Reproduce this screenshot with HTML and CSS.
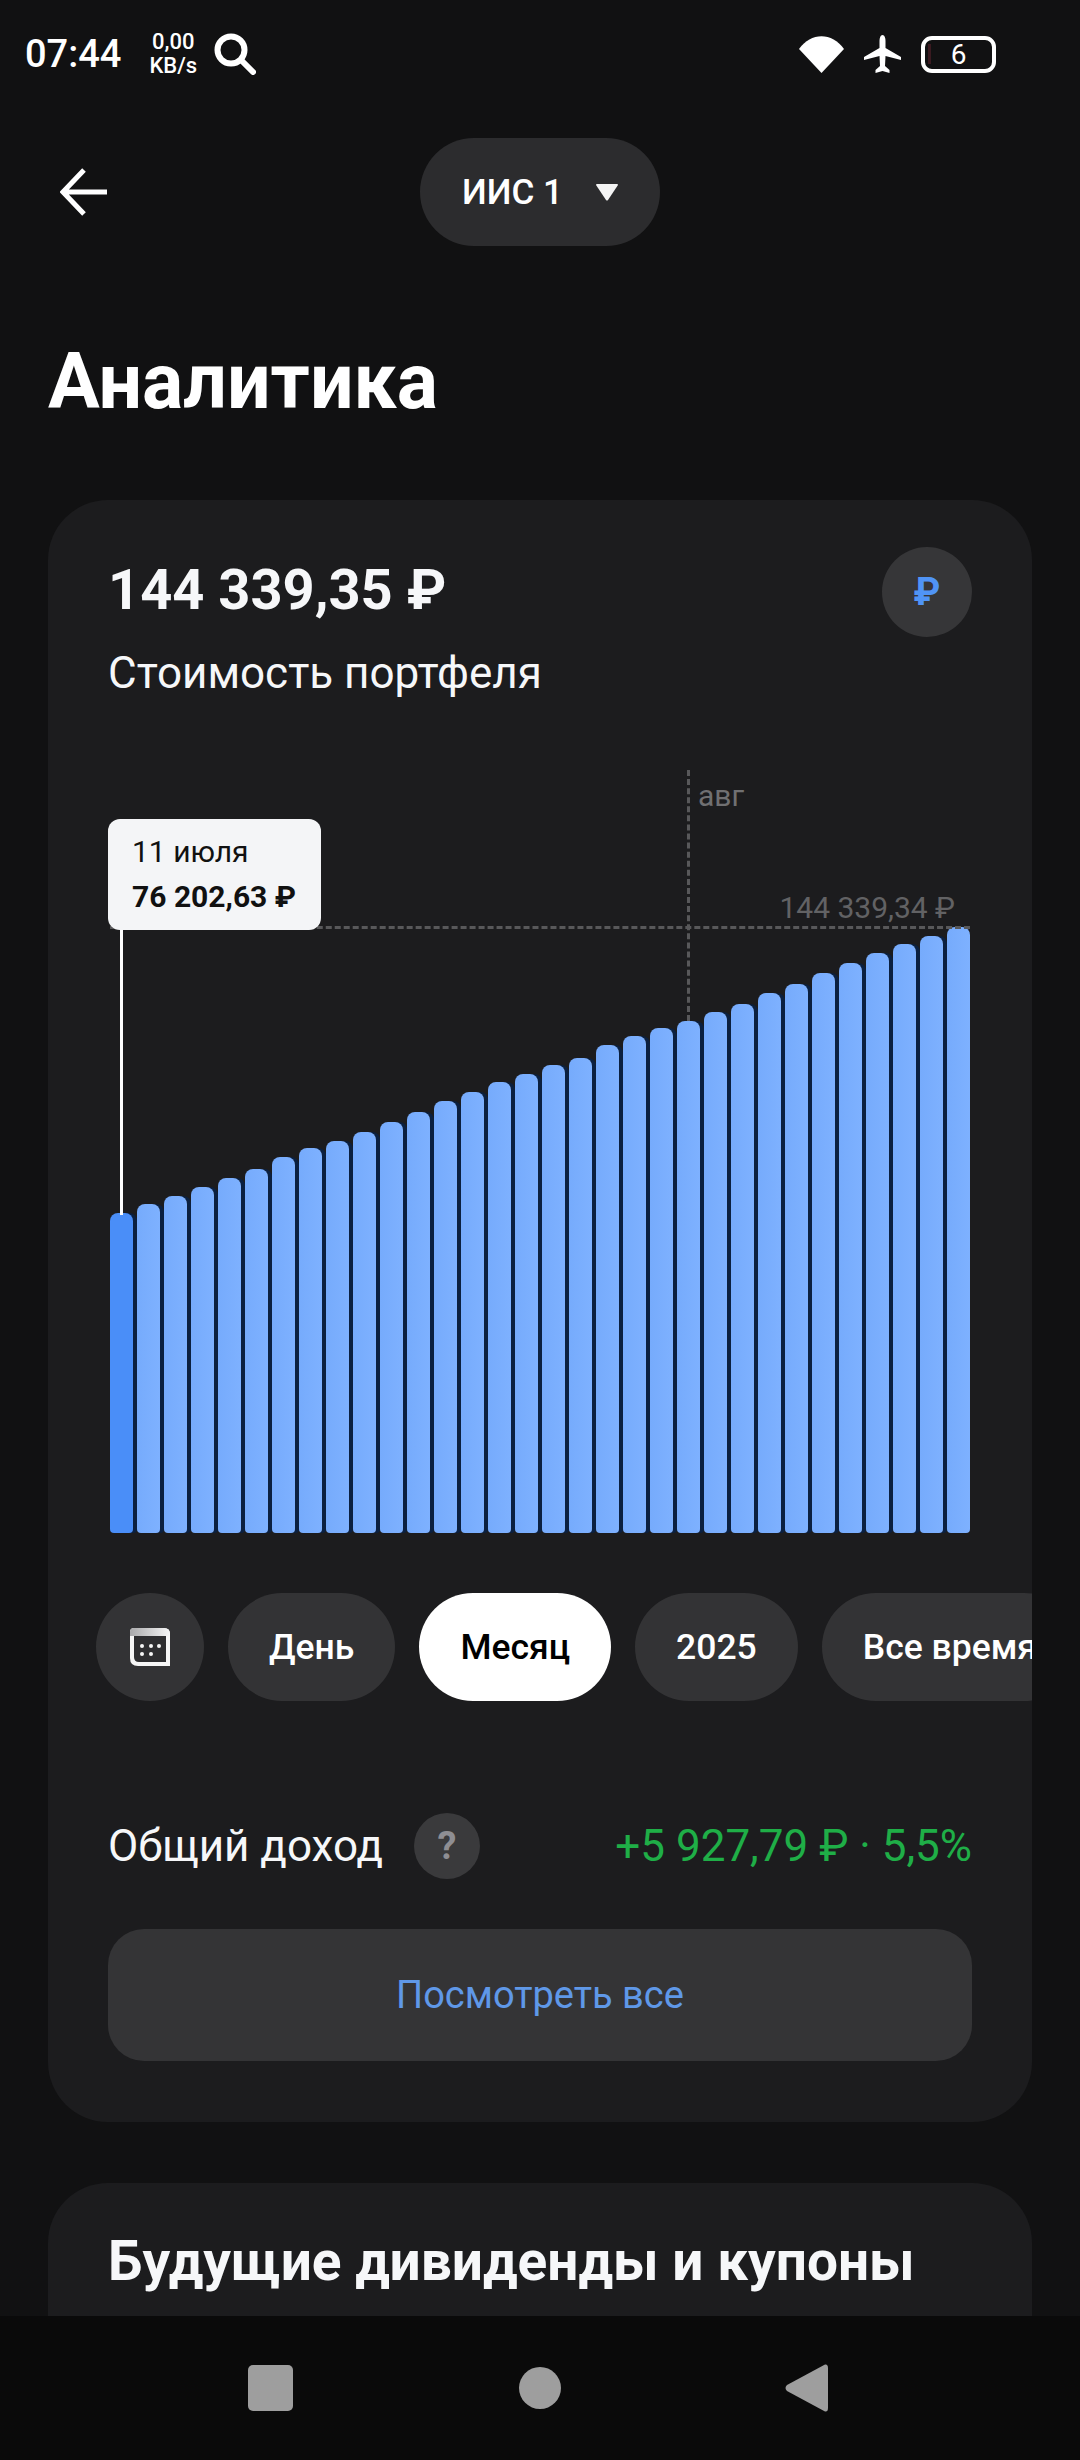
FILE: index.html
```html
<!DOCTYPE html>
<html lang="ru">
<head>
    <meta charset="UTF-8">
    <meta name="viewport" content="width=device-width, initial-scale=1.0">
    <title>Аналитика</title>
    <link rel="stylesheet" href="styles.css">
</head>
<body>
<div class="phone">

    <div class="screen">
        <div class="statusBar">
            <div class="statusLeft">
                <span class="clock">07:44</span>
                <span class="netSpeed">0,00<br>KB/s</span>
                <svg class="searchIcon" viewBox="0 0 42 42" width="42" height="42">
                    <circle cx="17" cy="17" r="13.5" fill="none" stroke="#fff" stroke-width="6"/>
                    <path d="M27 27 L39 39" stroke="#fff" stroke-width="6" stroke-linecap="round"/>
                </svg>
            </div>
            <div class="statusRight">
                <svg viewBox="0 0 45 37" width="45" height="37">
                    <path d="M0 13 C12 -4 33 -4 45 13 L22.5 37 Z" fill="#fff"/>
                </svg>
                <svg viewBox="0 0 37 38" width="37" height="38">
                    <path d="M18.5 0 C20.5 0 21.5 3 21.5 6 L21.5 13 L37 22 L37 25 L21.5 21 L21 31 L25.500 35 L25.500 38 L18.500 36 L11.500 38 L11.500 35 L16 31 L15.500 21 L0 25 L0 22 L15.500 13 L15.500 6 C15.500 3 16.500 0 18.500 0 Z" fill="#fff"/>
                </svg>
                <div class="battery"><span class="batteryTint"></span>6</div>
            </div>
        </div>

        <div class="topBar">
            <svg class="backIcon" viewBox="0 0 48 48" width="48" height="48">
                <path d="M47 24 L4 24 M24 2 L3 24 L24 46" fill="none" stroke="#fff" stroke-width="5"/>
            </svg>
            <div class="accountPill">
                <span>ИИС 1</span>
                <svg viewBox="0 0 22 17" width="22" height="17"><path d="M0 1 Q0 0 1 0 L21 0 Q22 0 22 1 L12 16 Q11 17 10 16 Z" fill="#f4f4f4"/></svg>
            </div>
        </div>

        <h1 class="pageTitle">Аналитика</h1>

        <section class="card">
            <div class="cardHead">
                <div>
                    <div class="totalValue">144 339,35 ₽</div>
                    <div class="totalLabel">Стоимость портфеля</div>
                </div>
                <div class="currencyBtn">₽</div>
            </div>

            <div class="chart">
                <div class="bars">
                    <div class="bar barActive" style="height:320px"></div>
                    <div class="bar" style="height:329px"></div>
                    <div class="bar" style="height:337px"></div>
                    <div class="bar" style="height:346px"></div>
                    <div class="bar" style="height:355px"></div>
                    <div class="bar" style="height:364px"></div>
                    <div class="bar" style="height:376px"></div>
                    <div class="bar" style="height:385px"></div>
                    <div class="bar" style="height:392px"></div>
                    <div class="bar" style="height:401px"></div>
                    <div class="bar" style="height:411px"></div>
                    <div class="bar" style="height:421px"></div>
                    <div class="bar" style="height:432px"></div>
                    <div class="bar" style="height:441px"></div>
                    <div class="bar" style="height:451px"></div>
                    <div class="bar" style="height:459px"></div>
                    <div class="bar" style="height:468px"></div>
                    <div class="bar" style="height:475px"></div>
                    <div class="bar" style="height:488px"></div>
                    <div class="bar" style="height:497px"></div>
                    <div class="bar" style="height:505px"></div>
                    <div class="bar" style="height:512px"></div>
                    <div class="bar" style="height:521px"></div>
                    <div class="bar" style="height:529px"></div>
                    <div class="bar" style="height:540px"></div>
                    <div class="bar" style="height:549px"></div>
                    <div class="bar" style="height:560px"></div>
                    <div class="bar" style="height:570px"></div>
                    <div class="bar" style="height:580px"></div>
                    <div class="bar" style="height:589px"></div>
                    <div class="bar" style="height:597px"></div>
                    <div class="bar" style="height:606px"></div>
                </div>
                <div class="monthLine"></div>
                <div class="monthLabel">авг</div>
                <div class="maxLine"></div>
                <div class="maxLabel">144 339,34 ₽</div>
                <div class="pointerLine"></div>
                <div class="tooltip">
                    <div class="tooltipDate">11 июля</div>
                    <div class="tooltipValue">76 202,63 ₽</div>
                </div>
            </div>

            <div class="periods">
                <div class="period periodIcon">
                    <svg viewBox="0 0 40 38" width="40" height="38">
                        <defs>
                            <linearGradient id="calTop" x1="0" x2="1" y1="0" y2="0">
                                <stop offset="0" stop-color="#a9a9ab"/>
                                <stop offset="1" stop-color="#f6f6f6"/>
                            </linearGradient>
                        </defs>
                        <path d="M0 4 Q0 0 4 0 L34 0 Q40 0 40 6 L40 38 L8 38 Q0 38 0 30 Z" fill="#f6f6f6"/>
                        <path d="M0 4 Q0 0 4 0 L34 0 Q40 0 40 6 L40 8 L0 8 Z" fill="url(#calTop)"/>
                        <path d="M4 8 L36 8 L36 34 L9 34 Q4 34 4 29 Z" fill="#2e2e30"/>
                        <circle cx="12" cy="18" r="2" fill="#f6f6f6"/>
                        <circle cx="21" cy="18" r="2" fill="#f6f6f6"/>
                        <circle cx="29" cy="18" r="2" fill="#f6f6f6"/>
                        <circle cx="12" cy="26" r="2" fill="#f6f6f6"/>
                        <circle cx="21" cy="26" r="2" fill="#f6f6f6"/>
                    </svg>
                </div>
                <div class="period">День</div>
                <div class="period periodActive">Месяц</div>
                <div class="period">2025</div>
                <div class="period">Все время</div>
            </div>

            <div class="incomeRow">
                <div class="incomeLabel">
                    <span>Общий доход</span>
                    <span class="helpBtn">?</span>
                </div>
                <div class="incomeValue">+5 927,79 ₽ · 5,5%</div>
            </div>

            <div class="viewAll">Посмотреть все</div>
        </section>

        <section class="card cardNext">
            <h2 class="cardTitle">Будущие дивиденды и купоны</h2>
        </section>
    </div>

    <div class="navBar">
        <span class="navSquare"></span>
        <span class="navCircle"></span>
        <svg viewBox="0 0 43 48" width="43" height="48">
            <path d="M40 0.500 Q43 0 43 4 L43 44 Q43 48 40 47.500 L2 27 Q-1 24 2 21 Z" fill="#9e9e9e"/>
        </svg>
    </div>

</div>
</body>
</html>
```

FILE: styles.css
```css
* {
    box-sizing: border-box;
}

body {
    margin: 0;
    background-color: #111112;
    color: #fff;
    font-family: Roboto, "Liberation Sans", sans-serif;
}

.phone {
    width: 1080px;
    height: 2460px;
    display: flex;
    flex-direction: column;
    overflow: hidden;
}

.screen {
    flex: 1;
    min-height: 0;
    overflow: hidden;
}

/* status bar */
.statusBar {
    height: 108px;
    padding: 0 84px 0 25px;
    display: flex;
    justify-content: space-between;
    align-items: center;
}

.statusLeft, .statusRight {
    display: flex;
    align-items: center;
}

.clock {
    font-size: 38px;
    font-weight: 500;
}

.netSpeed {
    margin-left: 28px;
    font-size: 22px;
    font-weight: 500;
    line-height: 24px;
    text-align: center;
}

.searchIcon {
    margin-left: 17px;
}

.statusRight {
    gap: 20px;
}

.battery {
    position: relative;
    width: 75px;
    height: 37px;
    border: 4px solid #fff;
    border-radius: 11px;
    font-size: 28px;
    line-height: 29px;
    text-align: center;
}

.batteryTint {
    position: absolute;
    left: 3px;
    top: 4px;
    width: 3px;
    height: 20px;
    background-color: #3a1a20;
}

/* top bar */
.topBar {
    margin-top: 30px;
    height: 108px;
    padding-left: 60px;
    display: grid;
    grid-template-columns: 360px 240px;
    align-items: center;
}

.accountPill {
    height: 108px;
    border-radius: 54px;
    background-color: #2c2c2e;
    display: flex;
    justify-content: center;
    align-items: center;
    gap: 33px;
    font-size: 35px;
    font-weight: 500;
}

.pageTitle {
    margin: 96px 0 0 48px;
    height: 80px;
    font-size: 77px;
    line-height: 80px;
    font-weight: 700;
}

/* cards */
.card {
    margin: 78px 48px 0;
    padding: 0 60px;
    height: 1622px;
    border-radius: 60px;
    background-color: #1c1c1e;
}

.cardHead {
    padding-top: 47px;
    display: flex;
    justify-content: space-between;
    align-items: flex-start;
}

.cardHead > div:first-child {
    padding-top: 11px;
}

.totalValue {
    font-size: 56px;
    line-height: 64px;
    font-weight: 700;
    color: #f6f7f9;
}

.totalLabel {
    margin-top: 26px;
    font-size: 44px;
    line-height: 50px;
    color: #f6f7f9;
}

.currencyBtn {
    width: 90px;
    height: 90px;
    border-radius: 50%;
    background-color: #363638;
    color: #5094f5;
    font-size: 38px;
    font-weight: 700;
    line-height: 90px;
    text-align: center;
}

/* chart */
.chart {
    position: relative;
    margin: 72px 2px 0;
    height: 763px;
}

.bars {
    height: 100%;
    display: flex;
    align-items: flex-end;
    gap: 4px;
}

.bar {
    width: 23px;
    border-radius: 8px 8px 4px 4px;
    background: linear-gradient(90deg, #76abfc, #7eb1ff);
    box-shadow: 4px 0 0 #0b2040;
}

.bar:last-child {
    box-shadow: none;
}

.barActive {
    background: #4a8ef8;
}

.monthLine {
    position: absolute;
    left: 577px;
    top: 0;
    height: 251px;
    border-left: 3px dashed #58585a;
}

.monthLabel {
    position: absolute;
    left: 588px;
    top: 9px;
    font-size: 30px;
    line-height: 34px;
    color: #707072;
}

.maxLine {
    position: absolute;
    left: 0;
    right: 0;
    top: 156px;
    border-top: 3px dashed #58585a;
}

.maxLabel {
    position: absolute;
    right: 15px;
    top: 120px;
    font-size: 30px;
    line-height: 36px;
    color: #626264;
}

.pointerLine {
    position: absolute;
    left: 10px;
    top: 150px;
    width: 3px;
    height: 295px;
    background-color: #fff;
}

.tooltip {
    position: absolute;
    left: -2px;
    top: 49px;
    width: 213px;
    height: 111px;
    padding: 13px 0 0 24px;
    border-radius: 12px;
    background-color: #f4f5f7;
    color: #111;
}

.tooltipDate {
    font-size: 30px;
    line-height: 40px;
}

.tooltipValue {
    margin-top: 7px;
    font-size: 30px;
    line-height: 36px;
    font-weight: 700;
}

/* period filter */
.periods {
    margin: 60px -60px 0;
    padding-left: 48px;
    display: flex;
    gap: 24px;
    overflow: hidden;
}

.period {
    flex: none;
    height: 108px;
    padding: 0 41px;
    border-radius: 54px;
    background-color: #333335;
    font-size: 35.5px;
    font-weight: 500;
    line-height: 108px;
}

.periodIcon {
    width: 108px;
    padding: 0;
    display: flex;
    justify-content: center;
    align-items: center;
}

.periodActive {
    background-color: #fff;
    color: #000;
}

/* income */
.incomeRow {
    margin-top: 111px;
    height: 68px;
    display: flex;
    justify-content: space-between;
    align-items: center;
}

.incomeLabel {
    display: flex;
    align-items: center;
    gap: 31px;
    font-size: 44px;
    color: #f6f7f9;
}

.helpBtn {
    width: 66px;
    height: 66px;
    border-radius: 50%;
    background-color: #3a3a3c;
    color: #8e8e93;
    font-size: 38px;
    font-weight: 700;
    line-height: 66px;
    text-align: center;
}

.incomeValue {
    font-size: 44px;
    color: #1fae47;
}

.viewAll {
    margin-top: 49px;
    height: 132px;
    border-radius: 36px;
    background-color: #343436;
    color: #5f98e8;
    font-size: 38px;
    line-height: 132px;
    text-align: center;
}

.cardNext {
    margin-top: 61px;
}

.cardTitle {
    margin: 0;
    padding-top: 48px;
    font-size: 55px;
    line-height: 60px;
    font-weight: 700;
    color: #f6f7f9;
}

/* bottom nav */
.navBar {
    flex: none;
    height: 144px;
    padding: 0 252px 0 248px;
    background-color: #0a0a0a;
    display: flex;
    justify-content: space-between;
    align-items: center;
}

.navSquare {
    width: 45px;
    height: 46px;
    border-radius: 5px;
    background-color: #9e9e9e;
}

.navCircle {
    width: 42px;
    height: 42px;
    margin-left: 2px;
    border-radius: 50%;
    background-color: #9e9e9e;
}
```
